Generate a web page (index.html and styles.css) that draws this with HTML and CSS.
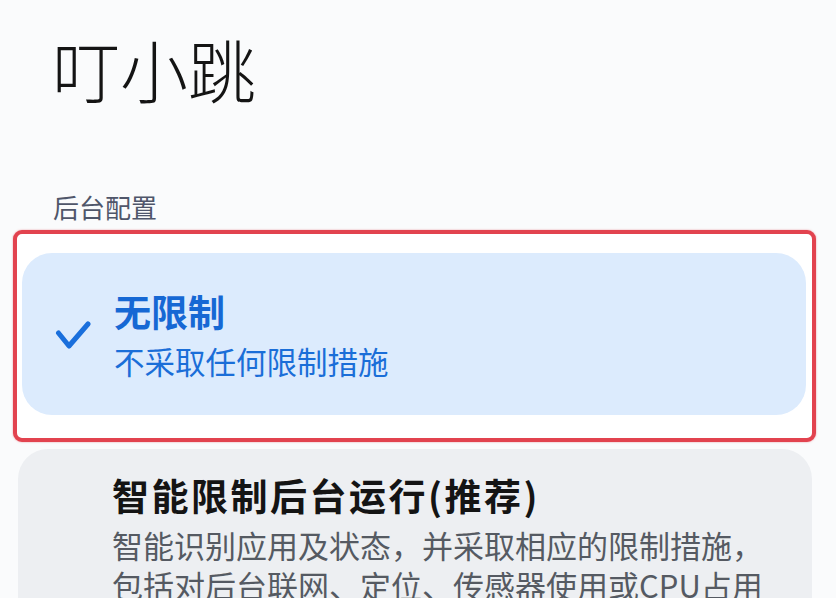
FILE: index.html
```html
<!DOCTYPE html>
<html lang="zh-CN">
<head>
<meta charset="utf-8">
<title>叮小跳</title>
<link rel="stylesheet" href="styles.css">
</head>
<body>
<div class="screen">
  <h1 class="app-name">叮小跳</h1>
  <div class="section-label">后台配置</div>
  <div class="highlight">
    <div class="option option-selected">
      <svg class="check" width="36" height="30" viewBox="0 0 36 30" aria-hidden="true">
        <path d="M3.5 13 L14 26 L33 4" fill="none" stroke="#1a6fdc" stroke-width="5" stroke-linecap="round" stroke-linejoin="round"/>
      </svg>
      <div class="option-text">
        <div class="option-title">无限制</div>
        <div class="option-desc">不采取任何限制措施</div>
      </div>
    </div>
  </div>
  <div class="option option-normal">
    <div class="option-text">
      <div class="option-title">智能限制后台运行(推荐)</div>
      <div class="option-desc">智能识别应用及状态，并采取相应的限制措施，<br>包括对后台联网、定位、传感器使用或CPU占用</div>
    </div>
  </div>
</div>
</body>
</html>
```

FILE: styles.css
```css
* { box-sizing: border-box; }
html, body {
  margin: 0;
  padding: 0;
  background: #fafbfc;
  font-family: "Noto Sans CJK SC", "Noto Sans", sans-serif;
  overflow: hidden;
}
.screen {
  width: 836px;
  height: 598px;
  overflow: hidden;
  padding-top: 28px;
}
.app-name {
  margin: 0 0 0 52px;
  font-size: 68px;
  font-weight: 300;
  line-height: 82px;
  color: #141414;
}
.section-label {
  margin: 80px 0 0 53px;
  font-size: 26px;
  line-height: 34px;
  color: #4f566a;
}
.highlight {
  margin: 6px 0 0 13px;
  width: 803px;
  border: 4px solid #e2434f;
  border-radius: 9px;
  box-shadow: 0 0 2px rgba(226, 67, 79, 0.55);
  background: #ffffff;
  padding: 19px 6px 23px 5px;
}
.option {
  display: flex;
  align-items: center;
  border-radius: 30px;
}
.option-selected {
  height: 162px;
  background: #dcebfd;
  padding-left: 33px;
}
.check {
  flex: none;
  margin-right: 23px;
  margin-top: 2px;
}
.option-title {
  font-size: 37px;
  line-height: 48px;
  font-weight: 700;
}
.option-desc {
  font-size: 30px;
  line-height: 40px;
}
.option-selected .option-title { color: #1668d4; }
.option-selected .option-desc { color: #1a6ed8; margin-top: 6px; font-size: 30.5px; }
.option-normal {
  margin: 7px 0 0 18px;
  width: 794px;
  height: 200px;
  align-items: flex-start;
  background: #edeff2;
  padding: 22px 0 0 94px;
}
.option-normal .option-title {
  color: #141414;
  letter-spacing: 2.5px;
}
.option-normal .option-desc {
  color: #555a62;
  font-size: 31px;
  margin-top: 6px;
}
```
